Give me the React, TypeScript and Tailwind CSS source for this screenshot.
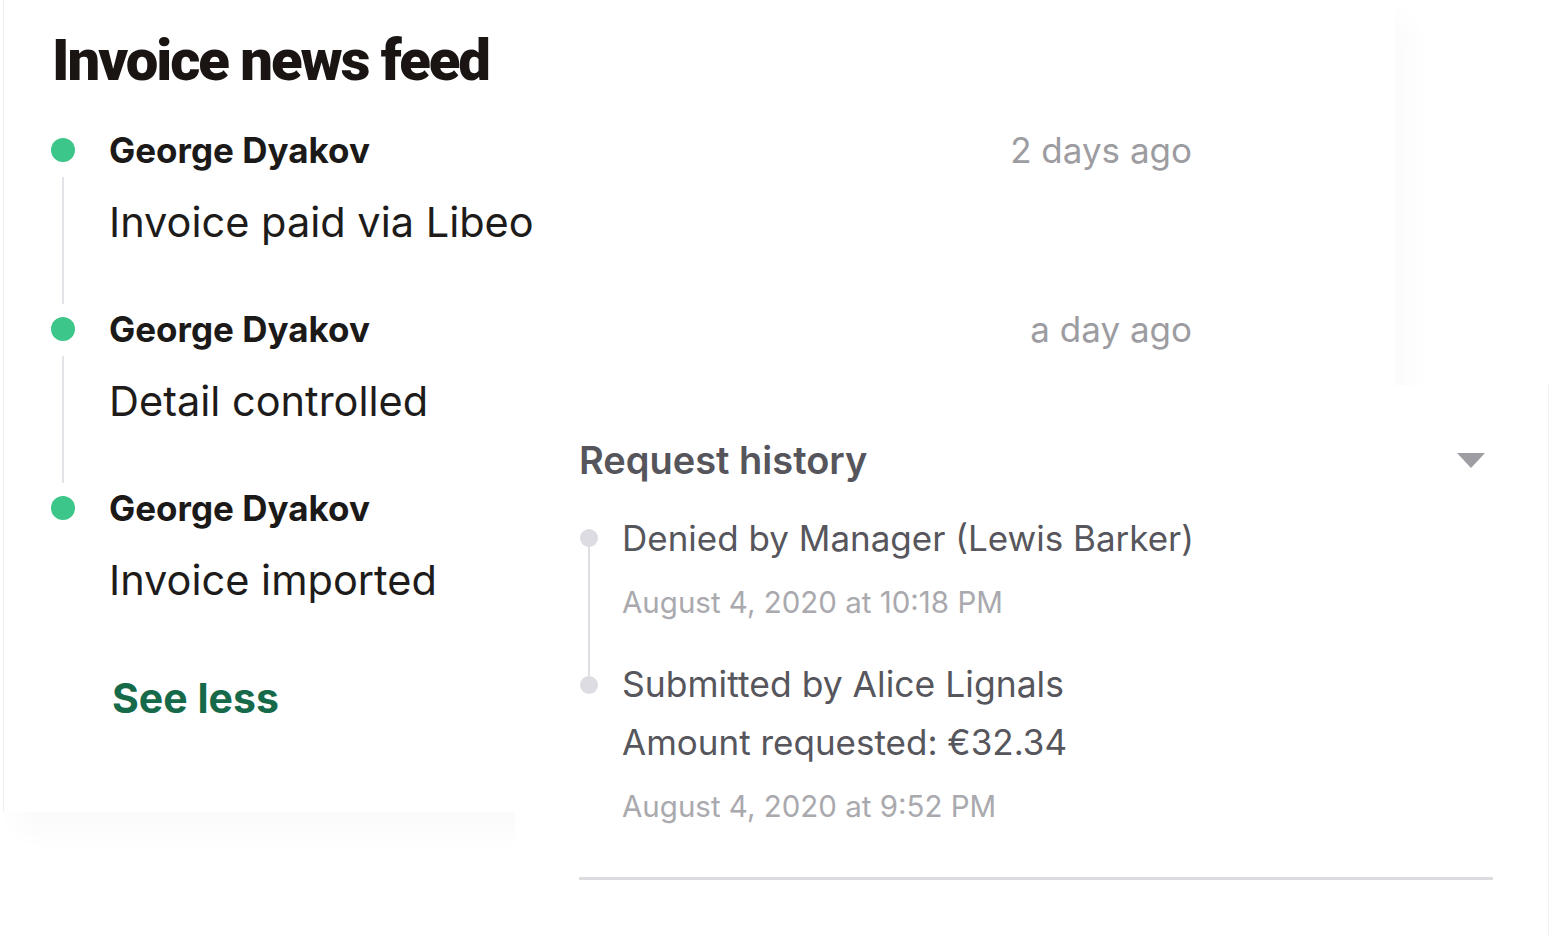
import React from "react";

const feed = [
  { name: "George Dyakov", time: "2 days ago", text: "Invoice paid via Libeo" },
  { name: "George Dyakov", time: "a day ago", text: "Detail controlled" },
  { name: "George Dyakov", time: "", text: "Invoice imported" },
];

function Caret() {
  return (
    <svg width="28" height="15" viewBox="0 0 28 15">
      <polygon points="0,0 28,0 14,15" fill="#9d9da3" />
    </svg>
  );
}

export default function App() {
  return (
    <div
      className="relative w-[1551px] h-[936px] overflow-hidden bg-white"
      style={{ fontFamily: "Inter, 'Liberation Sans', sans-serif" }}
    >
      {/* News feed card */}
      <div className="ml-[3px] w-[1392px] h-[812px] bg-white border-l border-[#efefef] shadow-[14px_20px_28px_rgba(0,0,0,0.025)] pl-[47px] pt-[31px]">
        <h1 className="ml-[1px] font-['Roboto',sans-serif] font-black text-[58px] leading-none tracking-[-0.035em] text-[#1a1513]">
          Invoice news feed
        </h1>

        <div className="mt-[41px] flex flex-col">
          {feed.map((item, i) => (
            <div key={i} className="flex h-[179px]">
              {/* dot + line */}
              <div className="w-6 flex flex-col items-center">
                <div className="mt-2 w-6 h-6 shrink-0 rounded-full bg-[#3cc68a]" />
                {i < feed.length - 1 && (
                  <div className="mt-[15px] mb-[5px] w-[2px] flex-1 bg-[#e3e3e8]" />
                )}
              </div>
              <div className="ml-[34px] w-[1083px] flex flex-col">
                <div className="h-10 flex items-center justify-between">
                  <span className="font-bold text-[35px] text-[#1c1a19]">{item.name}</span>
                  <span className="text-[35px] text-[#9c9ca1]">{item.time}</span>
                </div>
                <div className="mt-[30px] h-11 flex items-center text-[41.5px] text-[#1e1c1b]">
                  {item.text}
                </div>
              </div>
            </div>
          ))}
        </div>

        <button className="mt-[10px] ml-[61px] h-11 flex items-center font-bold text-[41px] text-[#166a4a]">
          See less
        </button>
      </div>

      {/* Request history card, lying over the feed card */}
      <div className="absolute left-[515px] top-[385px] right-[2px] bottom-0 bg-white border-r border-[#f2f2f2] pl-[64px] pr-[55px] pt-[53px]">
        <div className="h-11 flex items-center justify-between">
          <span className="font-semibold text-[38px] text-[#55555b]">Request history</span>
          <span className="mr-2 flex items-center">
            <Caret />
          </span>
        </div>

        <div className="mt-[36px] flex">
          <div className="w-5 flex flex-col items-center">
            <div className="mt-[11px] w-[18px] h-[18px] shrink-0 rounded-full bg-[#dcdce2]" />
            <div className="w-[2px] flex-1 bg-[#dedee4]" />
          </div>
          <div className="ml-[23px] flex flex-col pb-[46px]">
            <div className="h-10 flex items-center text-[35px] text-[#56565c]">
              Denied by Manager (Lewis Barker)
            </div>
            <div className="mt-[27px] h-[34px] flex items-center text-[29.5px] text-[#a9a9ae]">
              August 4, 2020 at 10:18 PM
            </div>
          </div>
        </div>

        <div className="flex">
          <div className="w-5 flex flex-col items-center">
            <div className="h-[11px] w-[2px] bg-[#dedee4]" />
            <div className="w-[18px] h-[18px] shrink-0 rounded-full bg-[#dcdce2]" />
          </div>
          <div className="ml-[23px] flex flex-col">
            <div className="h-10 flex items-center text-[35.5px] text-[#56565c]">
              Submitted by Alice Lignals
            </div>
            <div className="mt-[17px] h-10 flex items-center text-[35px] text-[#56565c]">
              Amount requested: €32.34
            </div>
            <div className="mt-[27px] h-[34px] flex items-center text-[29.5px] text-[#a9a9ae]">
              August 4, 2020 at 9:52 PM
            </div>
          </div>
        </div>

        <div className="mt-[54px] h-[3px] bg-[#dcdce0]" />
      </div>
    </div>
  );
}
